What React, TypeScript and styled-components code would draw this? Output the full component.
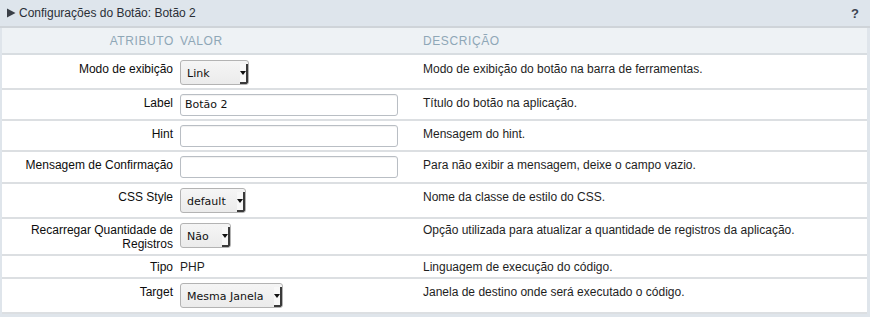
import React from "react";
import styled, { createGlobalStyle } from "styled-components";

const Global = createGlobalStyle`
  html, body { margin: 0; padding: 0; background: #ffffff; }
  body { font-family: "Liberation Sans", Arial, sans-serif; font-size: 12px; color: #222; }
`;

const Panel = styled.div`
  width: 870px;
  height: 317px;
  background: #dfe5eb;
  box-sizing: border-box;
  overflow: hidden;
`;

const TitleBar = styled.div`
  height: 28px;
  display: flex;
  align-items: center;
  justify-content: space-between;
  padding: 0 11px 0 6px;
  background: #dee5ec;
  border-bottom: 2px solid #cfd4d9;
  box-sizing: border-box;
  color: #2a2f36;
  font-size: 12px;
`;

const TitleText = styled.div`
  display: flex;
  align-items: center;
  gap: 3px;
`;

const Help = styled.span`
  font-weight: bold;
  font-size: 13px;
  color: #3c4350;
`;

const Body = styled.div`
  margin: 0 3px 0 2px;
  background: #ffffff;
`;

const Grid = styled.div`
  display: grid;
  grid-template-columns: 174px 243px 1fr;
`;

const HeaderCell = styled.div<{ $align?: string }>`
  height: 27px;
  display: flex;
  align-items: center;
  justify-content: ${(p) => (p.$align === "right" ? "flex-end" : "flex-start")};
  padding: ${(p) => (p.$align === "right" ? "1px 2px 0 0" : "1px 0 0 4px")};
  background: #eef2f5;
  border-bottom: 2px solid #d8dde1;
  color: #8ea7b7;
  font-size: 12px;
  letter-spacing: 0.6px;
  box-sizing: border-box;
`;

const Cell = styled.div<{ $kind: "label" | "value" | "desc"; $pt: number; $pb: number }>`
  padding: ${(p) => p.$pt}px ${(p) => (p.$kind === "label" ? "3px" : "4px")}
    ${(p) => p.$pb}px 4px;
  text-align: ${(p) => (p.$kind === "label" ? "right" : "left")};
  line-height: 14px;
  font-size: 12px;
  color: ${(p) => (p.$kind === "label" ? "#0d0d0d" : "#1e1e1e")};
  border-bottom: 2px solid #dcdfe2;
  display: flex;
  justify-content: ${(p) => (p.$kind === "label" ? "flex-end" : "flex-start")};
  align-items: flex-start;
`;

const CellText = styled.span<{ $top: number }>`
  margin-top: ${(p) => p.$top}px;
`;

const SelectBox = styled.div<{ $w: number }>`
  width: ${(p) => p.$w}px;
  height: 25px;
  box-sizing: border-box;
  display: flex;
  align-items: stretch;
  border: 1px solid #b3b3b3;
  border-radius: 3px;
  background: linear-gradient(#f5f5f5, #ebebeb);
  font-family: "DejaVu Sans", sans-serif;
  font-size: 11px;
  color: #111;
  margin-top: 1px;
  overflow: hidden;
`;

const SelectLabel = styled.span`
  flex: 1;
  display: flex;
  align-items: center;
  padding-left: 6px;
  padding-top: 2px;
`;

const Arrow = styled.span`
  width: 6px;
  margin: 3px 0 0 0;
  background: #f8f8f8;
  border-right: 2px solid #3a3a3a;
  border-bottom: 2px solid #3a3a3a;
  border-bottom-right-radius: 2px;
  display: flex;
  align-items: center;
  justify-content: center;
  &::after {
    content: "";
    border-left: 3px solid transparent;
    border-right: 3px solid transparent;
    border-top: 4px solid #111;
  }
`;

const TextInput = styled.div`
  width: 218px;
  height: 22px;
  box-sizing: border-box;
  border: 1px solid #b9bec4;
  border-radius: 3px;
  box-shadow: inset 0 1px 1px rgba(0, 0, 0, 0.06);
  background: #fff;
  display: flex;
  align-items: center;
  padding-left: 4px;
  font-family: "DejaVu Sans", sans-serif;
  font-size: 11px;
  color: #111;
`;

const Footer = styled.div`
  height: 5px;
`;

const Triangle = () => (
  <svg width="10" height="10" viewBox="0 0 10 10">
    <path d="M1 0.5 L9.5 5 L1 9.5 Z" fill="#3a3f47" />
  </svg>
);

type Field =
  | { type: "select"; text: string; w: number }
  | { type: "input"; text: string }
  | { type: "text"; text: string };

type Row = { label: React.ReactNode; field: Field; desc: string; pt: number; pb: number; lt: number };

const rows: Row[] = [
  { label: "Modo de exibição", field: { type: "select", text: "Link", w: 69 }, desc: "Modo de exibição do botão na barra de ferramentas.", pt: 4, pb: 3, lt: 3 },
  { label: "Label", field: { type: "input", text: "Botão 2" }, desc: "Título do botão na aplicação.", pt: 4, pb: 3, lt: 2 },
  { label: "Hint", field: { type: "input", text: "" }, desc: "Mensagem do hint.", pt: 4, pb: 3, lt: 2 },
  { label: "Mensagem de Confirmação", field: { type: "input", text: "" }, desc: "Para não exibir a mensagem, deixe o campo vazio.", pt: 4, pb: 4, lt: 2 },
  { label: "CSS Style", field: { type: "select", text: "default", w: 66 }, desc: "Nome da classe de estilo do CSS.", pt: 3, pb: 4, lt: 3 },
  { label: <>Recarregar Quantidade de<br />Registros</>, field: { type: "select", text: "Não", w: 51 }, desc: "Opção utilizada para atualizar a quantidade de registros da aplicação.", pt: 3, pb: 3, lt: 1 },
  { label: "Tipo", field: { type: "text", text: "PHP" }, desc: "Linguagem de execução do código.", pt: 4, pb: 3, lt: 0 },
  { label: "Target", field: { type: "select", text: "Mesma Janela", w: 103 }, desc: "Janela de destino onde será executado o código.", pt: 3, pb: 4, lt: 3 },
];

const renderField = (f: Field) => {
  if (f.type === "select")
    return (
      <SelectBox $w={f.w}>
        <SelectLabel>{f.text}</SelectLabel>
        <Arrow />
      </SelectBox>
    );
  if (f.type === "input") return <TextInput>{f.text}</TextInput>;
  return <span>{f.text}</span>;
};

export default function App() {
  return (
    <>
      <Global />
      <Panel>
        <TitleBar>
          <TitleText>
            <Triangle />
            <span>Configurações do Botão: Botão 2</span>
          </TitleText>
          <Help>?</Help>
        </TitleBar>
        <Body>
          <Grid>
            <HeaderCell $align="right">ATRIBUTO</HeaderCell>
            <HeaderCell>VALOR</HeaderCell>
            <HeaderCell>DESCRIÇÃO</HeaderCell>
            {rows.map((r, i) => (
              <React.Fragment key={i}>
                <Cell $kind="label" $pt={r.pt} $pb={r.pb}>
                  <CellText $top={r.lt}>{r.label}</CellText>
                </Cell>
                <Cell $kind="value" $pt={r.pt} $pb={r.pb}>
                  {renderField(r.field)}
                </Cell>
                <Cell $kind="desc" $pt={r.pt} $pb={r.pb}>
                  <CellText $top={r.lt}>{r.desc}</CellText>
                </Cell>
              </React.Fragment>
            ))}
          </Grid>
        </Body>
        <Footer />
      </Panel>
    </>
  );
}
